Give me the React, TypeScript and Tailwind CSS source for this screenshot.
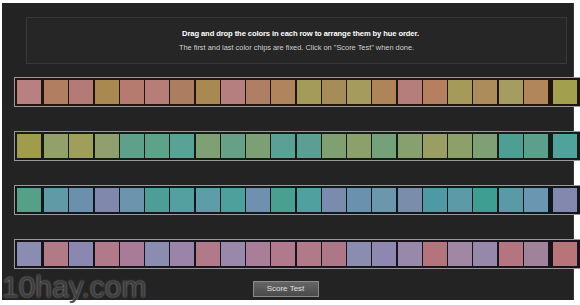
const rows: { bg: string; chips: string[] }[] = [
  {
    bg: "#22150f",
    chips: [
      "#b88080", "#b17e62", "#b47b76", "#a9894f", "#b47b6e", "#b77d78", "#ad7d62", "#a98852",
      "#b57f80", "#ae7e65", "#b0845c", "#a49a5a", "#a68c58", "#a59b5c", "#ad8559", "#b67e7a",
      "#b48060", "#a69a5b", "#ab8c5a", "#a49c60", "#b0865a", "#a2a04f",
    ],
  },
  {
    bg: "#141c15",
    chips: [
      "#a09c4c", "#94a06a", "#a09e5c", "#8fa06e", "#5fa08a", "#5fa28c", "#58a296", "#7ea074",
      "#66a086", "#7c9f76", "#5aa094", "#5c9e92", "#80a072", "#8ca06c", "#74a07a", "#88a070",
      "#9a9e62", "#8ea069", "#7fa074", "#4f9e94", "#5ca08c", "#50a29c",
    ],
  },
  {
    bg: "#11181d",
    chips: [
      "#56a088", "#5f9aa6", "#6d8fae", "#8088ac", "#6c94ac", "#4e9e98", "#54a0a0", "#5e9ca8",
      "#4ea09c", "#7090b0", "#4aa090", "#50a0a0", "#7a8cae", "#6a92ae", "#6c96ac", "#7a8eac",
      "#4e9aa4", "#5c9aa8", "#3e9e92", "#5a9aa6", "#6a96b2", "#8288ae",
    ],
  },
  {
    bg: "#18141d",
    chips: [
      "#8a8cb0", "#b07a86", "#8a88b0", "#b07a8a", "#a87c96", "#8a8cb0", "#9a84aa", "#b07a88",
      "#9a88aa", "#a87e98", "#b07a8c", "#b07a88", "#ac7888", "#8a8cb0", "#8e88b0", "#9888aa",
      "#b4747c", "#a088a4", "#9688aa", "#b47480", "#a0829a", "#b87478",
    ],
  },
];

function Chip({ color }: { color: string }) {
  return <div className="w-[24px] h-[24px] shrink-0" style={{ backgroundColor: color }} />;
}

function ChipRow({ bg, chips }: { bg: string; chips: string[] }) {
  const first = chips[0];
  const last = chips[chips.length - 1];
  const middle = chips.slice(1, -1);
  return (
    <div
      className="flex items-center w-[590px] h-[30px] border border-[#9a9a9a] px-[2px] py-[2px] shrink-0"
      style={{ backgroundColor: bg }}
    >
      <Chip color={first} />
      <div className="flex gap-[1.26px] ml-[3px]">
        {middle.map((c, i) => (
          <Chip key={i} color={c} />
        ))}
      </div>
      <div className="ml-[5px]">
        <Chip color={last} />
      </div>
    </div>
  );
}

export default function App() {
  return (
    <main className="relative w-[580px] h-[305px] bg-white overflow-hidden font-['Liberation_Sans',Arial,sans-serif]">
      <div className="mt-[3px] ml-[2px] w-[572px] h-[297px] bg-[#232323] border-r border-[#3a3a3a] flex flex-col">
        {/* Instructions */}
        <div className="mt-[14px] ml-[24px] w-[541px] h-[47px] border border-[#383838] bg-[#262626] flex flex-col items-center justify-center gap-[4px]">
          <p className="text-[7.6px] leading-[10px] font-bold text-white tracking-[-0.1px] pl-[8px]">
            Drag and drop the colors in each row to arrange them by hue order.
          </p>
          <p className="text-[7.4px] leading-[10px] text-[#d0d0d0]">
            The first and last color chips are fixed. Click on "Score Test" when done.
          </p>
        </div>

        {/* Rows */}
        <div className="mt-[13px] ml-[12px] flex flex-col gap-[24px]">
          {rows.map((r, i) => (
            <ChipRow key={i} bg={r.bg} chips={r.chips} />
          ))}
        </div>

        {/* Button */}
        <div className="mt-[12px] flex justify-center pr-[4px]">
          <button className="w-[66px] h-[16px] border border-[#8a8a8a] bg-gradient-to-b from-[#666] to-[#4a4a4a] text-[8px] leading-[14px] text-[#e0e0e0]">
            Score Test
          </button>
        </div>
      </div>

      {/* Watermark */}
      <span className="absolute left-[2px] top-[270px] text-[30px] leading-[34px] text-[#2a2a2a]/80 [text-shadow:0_0_2px_rgba(255,255,255,0.6)]">
        10hay.com
      </span>
    </main>
  );
}
